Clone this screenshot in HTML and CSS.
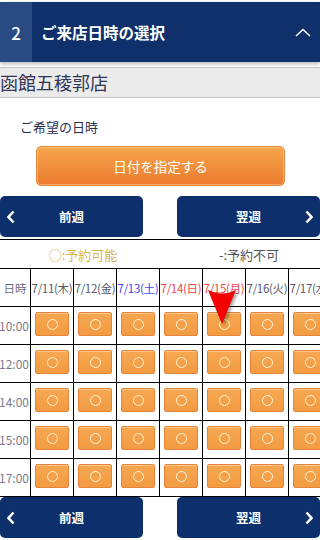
FILE: index.html
```html
<!DOCTYPE html>
<html lang="ja">
<head>
<meta charset="utf-8">
<title>ご来店日時の選択</title>
<link rel="stylesheet" href="styles.css">
</head>
<body>
<header class="step-head">
  <span class="step-num">2</span>
  <h2 class="step-title">ご来店日時の選択</h2>
  <svg class="step-toggle" width="16" height="9" viewBox="0 0 16 9"><path d="M1 8 L8 1.5 L15 8" fill="none" stroke="#fff" stroke-width="1.5"/></svg>
</header>
<div class="shop-bar">函館五稜郭店</div>
<p class="wish-label">ご希望の日時</p>
<button class="date-btn">日付を指定する</button>
<nav class="week-nav">
  <button class="week-btn prev"><svg class="chev" width="10" height="14" viewBox="0 0 10 14"><path d="M7.5 1.5 L2.5 7 L7.5 12.5" fill="none" stroke="#fff" stroke-width="2.6" stroke-linejoin="miter"/></svg>前週</button>
  <button class="week-btn next">翌週<svg class="chev" width="10" height="14" viewBox="0 0 10 14"><path d="M2.5 1.5 L7.5 7 L2.5 12.5" fill="none" stroke="#fff" stroke-width="2.6" stroke-linejoin="miter"/></svg></button>
</nav>
<section class="calendar">
  <div class="legend"><span class="legend-ok">○:予約可能</span><span class="legend-ng">-:予約不可</span></div>
  <div class="grid">
    <div class="cell head">日時</div>
    <div class="cell head day">7/11(木)</div>
    <div class="cell head day">7/12(金)</div>
    <div class="cell head day sat">7/13(土)</div>
    <div class="cell head day sun">7/14(日)</div>
    <div class="cell head day sun">7/15(月)</div>
    <div class="cell head day">7/16(火)</div>
    <div class="cell head day">7/17(水)</div>

    <div class="cell time">10:00</div>
    <div class="cell"><button class="slot"><span class="ring"></span></button></div>
    <div class="cell"><button class="slot"><span class="ring"></span></button></div>
    <div class="cell"><button class="slot"><span class="ring"></span></button></div>
    <div class="cell"><button class="slot"><span class="ring"></span></button></div>
    <div class="cell"><button class="slot"><span class="ring"></span></button></div>
    <div class="cell"><button class="slot"><span class="ring"></span></button></div>
    <div class="cell"><button class="slot"><span class="ring"></span></button></div>

    <div class="cell time">12:00</div>
    <div class="cell"><button class="slot"><span class="ring"></span></button></div>
    <div class="cell"><button class="slot"><span class="ring"></span></button></div>
    <div class="cell"><button class="slot"><span class="ring"></span></button></div>
    <div class="cell"><button class="slot"><span class="ring"></span></button></div>
    <div class="cell"><button class="slot"><span class="ring"></span></button></div>
    <div class="cell"><button class="slot"><span class="ring"></span></button></div>
    <div class="cell"><button class="slot"><span class="ring"></span></button></div>

    <div class="cell time">14:00</div>
    <div class="cell"><button class="slot"><span class="ring"></span></button></div>
    <div class="cell"><button class="slot"><span class="ring"></span></button></div>
    <div class="cell"><button class="slot"><span class="ring"></span></button></div>
    <div class="cell"><button class="slot"><span class="ring"></span></button></div>
    <div class="cell"><button class="slot"><span class="ring"></span></button></div>
    <div class="cell"><button class="slot"><span class="ring"></span></button></div>
    <div class="cell"><button class="slot"><span class="ring"></span></button></div>

    <div class="cell time">15:00</div>
    <div class="cell"><button class="slot"><span class="ring"></span></button></div>
    <div class="cell"><button class="slot"><span class="ring"></span></button></div>
    <div class="cell"><button class="slot"><span class="ring"></span></button></div>
    <div class="cell"><button class="slot"><span class="ring"></span></button></div>
    <div class="cell"><button class="slot"><span class="ring"></span></button></div>
    <div class="cell"><button class="slot"><span class="ring"></span></button></div>
    <div class="cell"><button class="slot"><span class="ring"></span></button></div>

    <div class="cell time">17:00</div>
    <div class="cell"><button class="slot"><span class="ring"></span></button></div>
    <div class="cell"><button class="slot"><span class="ring"></span></button></div>
    <div class="cell"><button class="slot"><span class="ring"></span></button></div>
    <div class="cell"><button class="slot"><span class="ring"></span></button></div>
    <div class="cell"><button class="slot"><span class="ring"></span></button></div>
    <div class="cell"><button class="slot"><span class="ring"></span></button></div>
    <div class="cell"><button class="slot"><span class="ring"></span></button></div>
  </div>
  <svg class="pin" width="32" height="40" viewBox="0 0 32 40"><path d="M1 1 Q15 8 29 1 L15 35 Z" fill="#f40000"/></svg>
</section>
<nav class="week-nav bottom">
  <button class="week-btn prev"><svg class="chev" width="10" height="14" viewBox="0 0 10 14"><path d="M7.5 1.5 L2.5 7 L7.5 12.5" fill="none" stroke="#fff" stroke-width="2.6"/></svg>前週</button>
  <button class="week-btn next">翌週<svg class="chev" width="10" height="14" viewBox="0 0 10 14"><path d="M2.5 1.5 L7.5 7 L2.5 12.5" fill="none" stroke="#fff" stroke-width="2.6"/></svg></button>
</nav>
</body>
</html>
```
FILE: styles.css
```css
* { box-sizing: border-box; }
html, body { margin: 0; padding: 0; }
body {
  width: 320px;
  height: 540px;
  overflow: hidden;
  padding-top: 2px;
  background: #fff;
  font-family: "Noto Sans CJK JP", "Noto Sans", sans-serif;
  color: #333;
}
.step-head {
  position: relative;
  display: flex;
  align-items: center;
  height: 60px;
  background: #0f306b;
  color: #fff;
  box-shadow: 0 2px 4px rgba(0,0,0,0.28);
}
.step-num {
  width: 32px;
  height: 60px;
  display: flex;
  align-items: center;
  justify-content: center;
  background: #294a82;
  font-size: 17px;
  font-weight: 500;
}
.step-title {
  margin: 0 0 0 9px;
  font-size: 15.5px;
  font-weight: 700;
  letter-spacing: 0;
  flex: 1;
}
.step-toggle { margin-right: 9px; }
.shop-bar {
  margin-top: 5px;
  height: 31px;
  border-top: 1px solid #c9c9c9;
  border-bottom: 1px solid #c3c3c3;
  background: #ebebeb;
  font-size: 18px;
  line-height: 29px;
  color: #2f3655;
  white-space: nowrap;
}
.wish-label {
  margin: 19px 0 0;
  padding-left: 20px;
  font-size: 13px;
  line-height: 20px;
  color: #2a3150;
}
.date-btn {
  display: block;
  margin: 9px 0 0 36px;
  width: 249px;
  height: 40px;
  border: 1px solid #e6843a;
  border-radius: 5px;
  background: linear-gradient(#f6a64c, #ec7b30);
  box-shadow: inset 0 0 0 1px rgba(255,230,190,0.45);
  color: #fff;
  font-family: inherit;
  font-size: 13.5px;
  padding: 0;
}
.week-nav {
  display: flex;
  justify-content: space-between;
  margin-top: 10px;
}
.week-nav.bottom { margin-top: 0; }
.week-btn {
  position: relative;
  width: 143px;
  height: 41px;
  border: none;
  border-radius: 5px;
  background: #0d306d;
  color: #fff;
  font-family: inherit;
  font-size: 12.5px;
  font-weight: 700;
  padding: 0;
  display: flex;
  align-items: center;
  justify-content: center;
}
.week-btn .chev { position: absolute; top: 14px; }
.week-btn.prev .chev { left: 6px; }
.week-btn.next .chev { right: 6px; }
.calendar {
  position: relative;
  width: 332px;
  margin-top: 2px;
}
.legend {
  display: grid;
  grid-template-columns: 1fr 1fr;
  height: 30px;
  border-top: 1px solid #000;
  border-bottom: 1px solid #000;
  align-items: center;
  text-align: center;
  font-size: 13px;
}
.legend-ok { color: #d8b649; }
.legend-ng { color: #555; }
.grid {
  display: grid;
  grid-template-columns: 31px repeat(7, 43px);
  grid-auto-rows: 38px;
}
.cell {
  border-right: 1px solid #000;
  border-bottom: 1px solid #000;
  display: flex;
  justify-content: center;
  align-items: flex-start;
}
.cell.head, .cell.time {
  align-items: center;
  font-size: 11.5px;
  color: #6c6e80;
  white-space: nowrap;
}
.cell.head.day {
  color: #585a6a;
  overflow: visible;
  letter-spacing: -0.3px;
}
.cell.head.sat { color: #4646ee; }
.cell.head.sun { color: #f04646; }
.cell.time {
  justify-content: flex-end;
  padding-right: 1px;
  color: #7a7c8e;
  font-size: 12px;
}
.slot {
  margin-top: 5px;
  width: 34px;
  height: 24px;
  padding: 0;
  border: 1px solid #e5853b;
  border-radius: 2px;
  background: linear-gradient(#f7a851, #f29b43);
  box-shadow: inset 0 1px 0 #fbc98f;
  display: flex;
  align-items: center;
  justify-content: center;
}
.ring {
  width: 11px;
  height: 11px;
  border: 1.3px solid #fff6d8;
  border-radius: 50%;
}
.pin {
  position: absolute;
  left: 207px;
  top: 50px;
  filter: drop-shadow(2px 2px 1.5px rgba(0,0,0,0.35));
}
```
